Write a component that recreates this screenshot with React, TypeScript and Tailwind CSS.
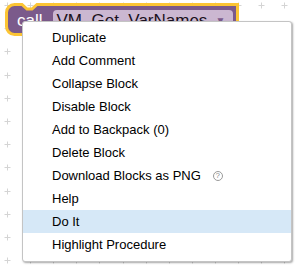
const items = [
  "Duplicate",
  "Add Comment",
  "Collapse Block",
  "Disable Block",
  "Add to Backpack (0)",
  "Delete Block",
  "Download Blocks as PNG",
  "Help",
  "Do It",
  "Highlight Procedure",
];

function GridBackground() {
  const xs: number[] = [];
  const ys: number[] = [];
  for (let i = 0; i < 13; i++) xs.push(7 + i * 23.1);
  for (let i = 0; i < 12; i++) ys.push(5 + i * 23.2);
  return (
    <svg className="absolute inset-0" width="296" height="265">
      {xs.map((x) =>
        ys.map((y) => (
          <g key={`${x}-${y}`} stroke="#d4d4d4" strokeWidth="1">
            <line x1={Math.round(x) - 2.5} y1={Math.round(y) + 0.5} x2={Math.round(x) + 3.5} y2={Math.round(y) + 0.5} />
            <line x1={Math.round(x) + 0.5} y1={Math.round(y) - 2.5} x2={Math.round(x) + 0.5} y2={Math.round(y) + 3.5} />
          </g>
        ))
      )}
    </svg>
  );
}

function CallBlock() {
  return (
    <div className="absolute left-0 top-0 h-[40px] w-[242px]">
      <svg className="absolute inset-0" width="242" height="40">
        <path
          d="M 6.5 12.5 A 8 8 0 0 1 14.5 4.5 H 22 l 5 4.5 h 5 l 5 -4.5 H 237.5 V 34.5 H 14.5 A 8 8 0 0 1 6.5 26.5 Z"
          fill="#7b5a8b"
          stroke="#fcc534"
          strokeWidth="3"
        />
      </svg>
      <div className="relative flex items-center h-full pl-[17px] pt-[1px]">
        <span className="text-[17px] text-white leading-none">call</span>
        <div className="ml-[10px] flex items-center h-[22px] w-[180px] rounded-[4px] bg-[#cbb7d1] pl-[4px]">
          <span className="text-[17px] text-[#1a1020] leading-none">VM_Get_VarNames</span>
          <span className="ml-[8px] text-[10px] text-[#7b5a8b]">▼</span>
        </div>
      </div>
    </div>
  );
}

function HelpIcon() {
  return (
    <span className="ml-[12px] inline-flex items-center justify-center w-[10px] h-[10px] rounded-full border border-[#9a9a9a] text-[8px] leading-none text-[#8a8a8a]">
      ?
    </span>
  );
}

export default function App() {
  return (
    <div
      className="relative w-[296px] h-[265px] bg-white overflow-hidden"
      style={{ fontFamily: '"Liberation Sans", Arial, sans-serif' }}
    >
      <GridBackground />
      <CallBlock />

      {/* context menu */}
      <div className="absolute left-[22px] top-[21px] w-[270px] h-[241px] rounded-[3px] border border-[#c4c4c4] bg-white pt-[4px] shadow-[1px_1px_2px_rgba(0,0,0,0.35)]">
        {items.map((label) => (
          <div
            key={label}
            className={`flex items-center h-[23px] pl-[29px] text-[13px] text-black ${
              label === "Do It" ? "bg-[#d6e8f7]" : ""
            }`}
          >
            {label}
            {label === "Download Blocks as PNG" && <HelpIcon />}
          </div>
        ))}
      </div>
    </div>
  );
}
